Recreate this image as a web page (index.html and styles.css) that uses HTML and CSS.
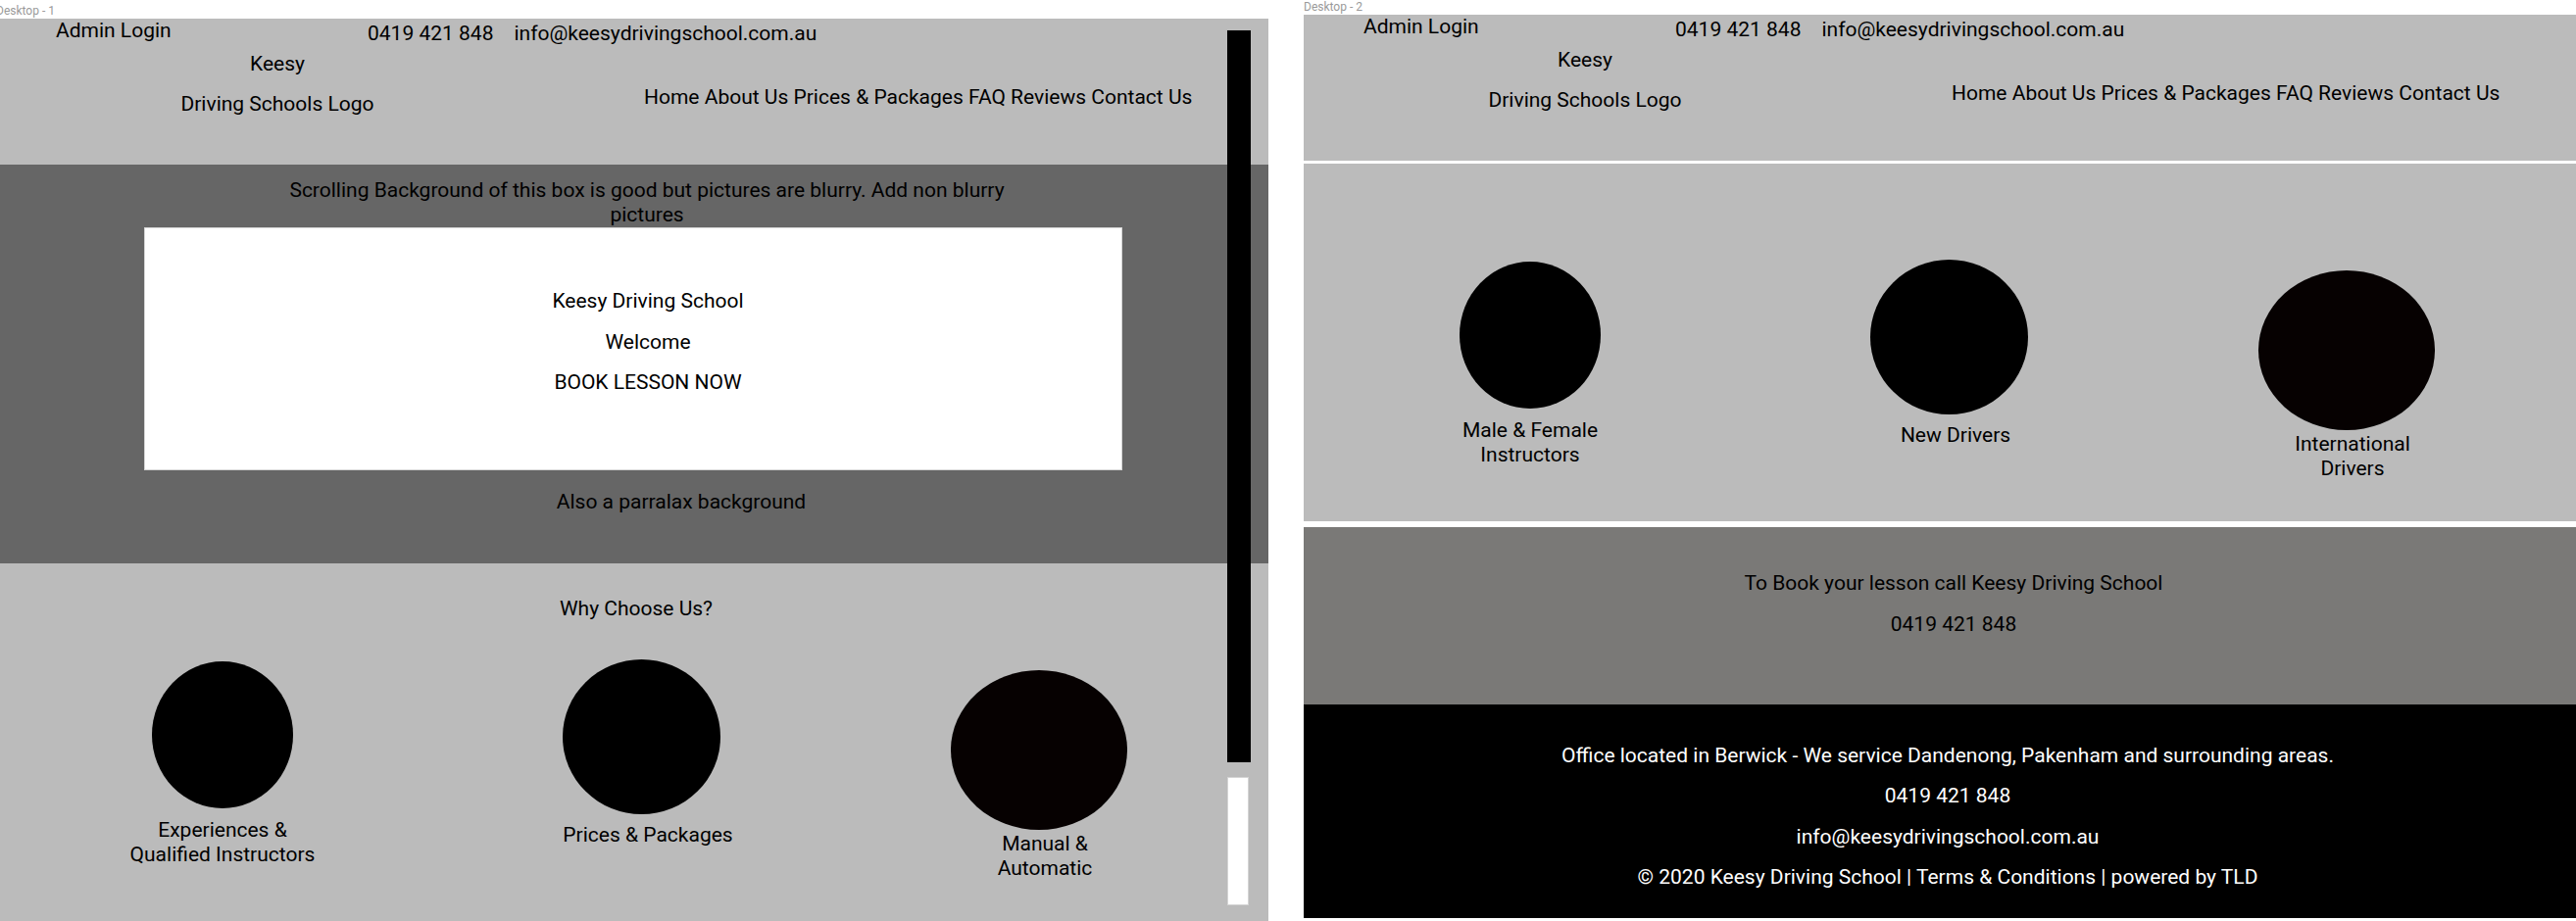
FILE: index.html
```html
<!DOCTYPE html>
<html lang="en">
<head>
  <meta charset="UTF-8">
  <title>Keesy Driving School - Wireframes</title>
  <link rel="stylesheet" href="styles.css">
</head>
<body>
  <div class="canvas">

    <!-- Desktop 1 -->
    <div class="board board-one">
      <div class="board-label">Desktop - 1</div>
      <div class="frame">
        <header class="site-header">
          <div class="topbar">
            <a class="admin">Admin Login</a>
            <div class="contact">
              <span>0419 421 848</span>
              <span>info@keesydrivingschool.com.au</span>
            </div>
          </div>
          <div class="brandbar">
            <div class="logo">
              <p>Keesy</p>
              <p>Driving Schools Logo</p>
            </div>
            <nav class="menu">Home About Us Prices &amp; Packages FAQ Reviews Contact Us</nav>
          </div>
        </header>

        <section class="hero">
          <p class="hero-note">Scrolling Background of this box is good but pictures are blurry. Add non blurry pictures</p>
          <div class="hero-box">
            <p>Keesy Driving School</p>
            <p>Welcome</p>
            <p>BOOK LESSON NOW</p>
          </div>
          <p class="hero-after">Also a parralax background</p>
        </section>

        <section class="features features-intro">
          <h2 class="features-title">Why Choose Us?</h2>
          <div class="feature-row">
            <div class="feature">
              <div class="dot dot-sm"></div>
              <p>Experiences &amp;<br>Qualified Instructors</p>
            </div>
            <div class="feature feature-mid">
              <div class="dot dot-md"></div>
              <p>Prices &amp; Packages</p>
            </div>
            <div class="feature feature-end">
              <div class="dot dot-lg"></div>
              <p>Manual &amp;<br>Automatic</p>
            </div>
          </div>
        </section>

        <div class="scrollbar">
          <span class="track"></span>
          <span class="thumb"></span>
        </div>
      </div>
    </div>

    <!-- Desktop 2 -->
    <div class="board board-two">
      <div class="board-label">Desktop - 2</div>
      <div class="frame">
        <header class="site-header">
          <div class="topbar">
            <a class="admin">Admin Login</a>
            <div class="contact">
              <span>0419 421 848</span>
              <span>info@keesydrivingschool.com.au</span>
            </div>
          </div>
          <div class="brandbar">
            <div class="logo">
              <p>Keesy</p>
              <p>Driving Schools Logo</p>
            </div>
            <nav class="menu">Home About Us Prices &amp; Packages FAQ Reviews Contact Us</nav>
          </div>
        </header>

        <section class="features features-more">
          <div class="feature-row">
            <div class="feature">
              <div class="dot dot-sm"></div>
              <p>Male &amp; Female<br>Instructors</p>
            </div>
            <div class="feature feature-mid">
              <div class="dot dot-md"></div>
              <p>New Drivers</p>
            </div>
            <div class="feature feature-end">
              <div class="dot dot-lg"></div>
              <p>International<br>Drivers</p>
            </div>
          </div>
        </section>

        <section class="booking">
          <p>To Book your lesson call Keesy Driving School</p>
          <p>0419 421 848</p>
        </section>

        <footer class="site-footer">
          <p>Office located in Berwick - We service Dandenong, Pakenham and surrounding areas.</p>
          <p>0419 421 848</p>
          <p>info@keesydrivingschool.com.au</p>
          <p>&copy; 2020 Keesy Driving School | Terms &amp; Conditions | powered by TLD</p>
        </footer>
      </div>
    </div>

  </div>
</body>
</html>
```

FILE: styles.css
```css
html, body {
  overflow: hidden;
}

body {
  margin: 0;
  background: #fff;
  font-family: Roboto, "Liberation Sans", sans-serif;
  font-size: 21px;
  line-height: 25px;
  color: #000;
}

p, h2 {
  margin: 0;
  font-size: 21px;
  font-weight: normal;
}

.canvas {
  display: flex;
  gap: 36px;
  margin-left: -4px;
}

.board {
  width: 1298px;
  flex-shrink: 0;
}

.board-one {
  padding-top: 4px;
}

.board-label {
  font-size: 12px;
  line-height: 15px;
  color: #9a9a9a;
}

.frame {
  position: relative;
  display: flex;
  flex-direction: column;
  background: #fff;
}

/* header */
.site-header {
  height: 149px;
  background: #bbbbbb;
}

.topbar {
  display: flex;
  align-items: flex-start;
}

.admin {
  flex: 0 0 379px;
  box-sizing: border-box;
  padding-left: 61px;
}

.contact {
  display: flex;
  gap: 21px;
  padding-top: 3px;
}

.brandbar {
  display: flex;
  align-items: flex-start;
  margin-top: 3px;
}

.logo {
  flex: 0 0 574px;
  text-align: center;
  padding-top: 3px;
}

.logo p + p {
  margin-top: 16px;
}

.menu {
  margin-left: 87px;
  padding-top: 37px;
}

/* hero */
.hero {
  height: 407px;
  background: #666666;
  padding-top: 14px;
  box-sizing: border-box;
}

.hero-note {
  width: 760px;
  margin-left: 284px;
  text-align: center;
}

.hero-box {
  width: 998px;
  height: 248px;
  margin-left: 151px;
  box-sizing: border-box;
  padding: 62px 0 0 30px;
  background: #fff;
  border: 1px solid #d6d6d6;
  text-align: center;
}

.hero-box p + p {
  margin-top: 16.5px;
}

.hero-after {
  margin-top: 20px;
  padding-left: 100px;
  text-align: center;
}

/* features */
.features {
  background: #bbbbbb;
}

.features-intro {
  height: 420px;
  padding-top: 34px;
}

.features-title {
  padding-left: 8px;
  margin-bottom: 39px;
  text-align: center;
}

.features-more {
  height: 365px;
  margin-top: 3px;
  padding-top: 98px;
  box-sizing: border-box;
}

.feature-row {
  display: grid;
  grid-template-columns: 462px 392px 420px;
  align-items: start;
}

.feature {
  display: flex;
  flex-direction: column;
  align-items: center;
  text-align: center;
}

.feature-mid p {
  padding-left: 14px;
}

.feature-end p {
  padding-left: 12px;
}

.dot {
  border-radius: 50%;
  background: #000;
}

.dot-sm {
  width: 144px;
  height: 150px;
  margin: 2px 0 10px;
}

.dot-md {
  width: 161px;
  height: 158px;
  margin: 0 0 9px;
}

.dot-lg {
  width: 180px;
  height: 163px;
  margin: 11px 0 2px;
  background: #060101;
}

/* booking + footer */
.booking {
  height: 181px;
  margin-top: 6px;
  box-sizing: border-box;
  padding: 45px 0 0 28px;
  background: #7a7977;
  text-align: center;
}

.booking p + p {
  margin-top: 17px;
}

.site-footer {
  height: 218px;
  box-sizing: border-box;
  padding: 40px 0 0 16px;
  background: #000;
  color: #fff;
  text-align: center;
}

.site-footer p + p {
  margin-top: 16.3px;
}

/* fake scrollbar drawn in the mockup */
.scrollbar {
  position: absolute;
  top: 12px;
  left: 1256px;
  display: flex;
  flex-direction: column;
  gap: 15px;
}

.track {
  width: 24px;
  height: 747px;
  background: #000;
}

.thumb {
  width: 22px;
  height: 131px;
  background: #fff;
  border: 1px solid #d4d4d4;
  box-sizing: border-box;
}
```
